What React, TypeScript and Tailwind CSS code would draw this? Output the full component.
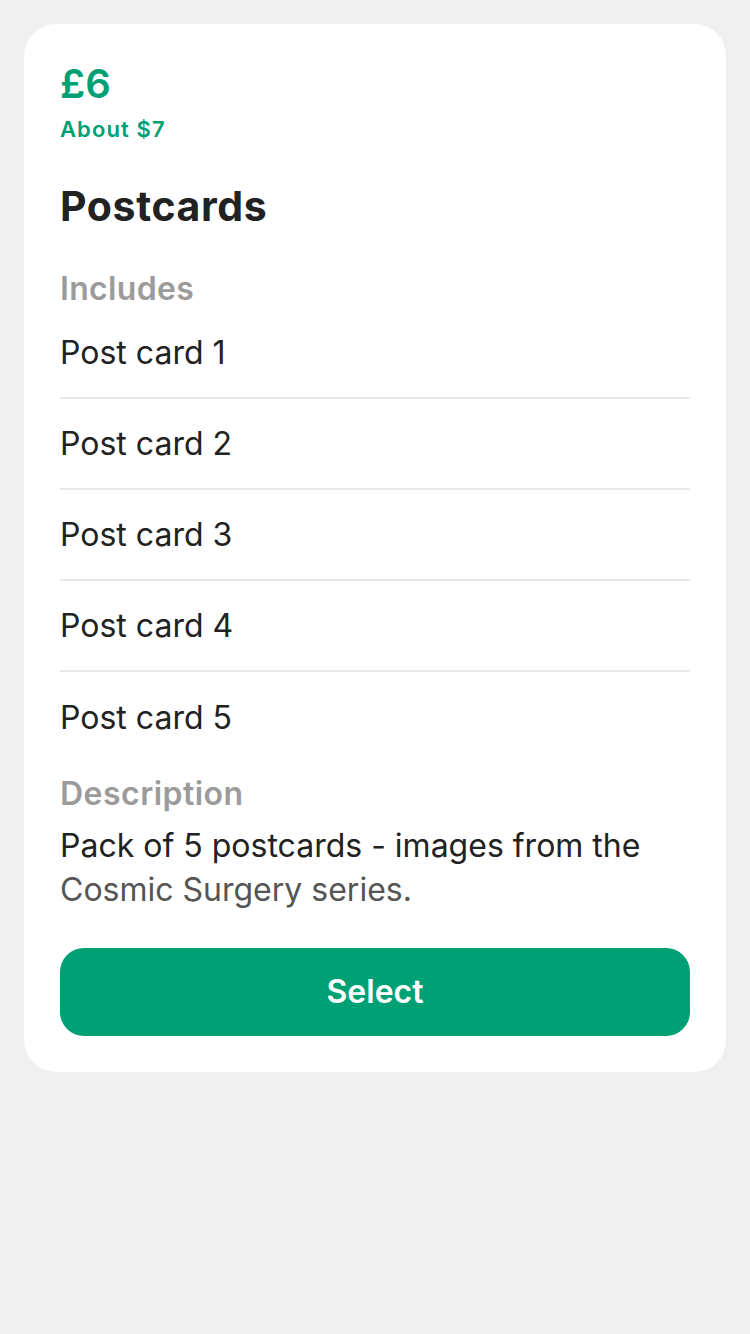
import React from 'react';

const items = ['Post card 1', 'Post card 2', 'Post card 3', 'Post card 4', 'Post card 5'];

const App: React.FC = () => {
  return (
    <div
      className="min-h-[1334px] w-full bg-[#efefef] pt-6"
      style={{ fontFamily: 'Inter, "Noto Sans", sans-serif' }}
    >
      <div className="mx-6 rounded-[32px] bg-white px-9 py-9">
        {/* Price */}
        <div className="text-[40px] font-semibold leading-[48px] text-[#00a074]">£6</div>
        <div className="mt-2 text-[22px] font-semibold leading-[26px] tracking-[0.05em] text-[#00a074]">About $7</div>

        <h1 className="mt-10 text-[41px] font-bold leading-[48px] tracking-[0.015em] text-[#222222]">Postcards</h1>

        {/* Includes */}
        <div className="mt-10 text-[32px] font-semibold leading-[38px] tracking-[0.01em] text-[#9b9b9b]">Includes</div>
        <div className="flex flex-col">
          {items.map((item, i) => (
            <div
              key={item}
              className={`flex h-[91px] items-center text-[32px] text-[#222222] ${
                i < items.length - 1 ? 'border-b-2 border-[#e8e8e8]' : ''
              }`}
            >
              {item}
            </div>
          ))}
        </div>

        {/* Description */}
        <div className="mt-3 text-[32px] font-semibold leading-[38px] tracking-[0.015em] text-[#9b9b9b]">Description</div>
        <p className="mt-[11px] text-[32px] leading-[44px] text-[#222222]">
          Pack of 5 postcards - images from the{' '}
          <span className="text-[#555555]">Cosmic Surgery series.</span>
        </p>

        <button className="mt-9 flex h-[88px] w-full items-center justify-center rounded-[24px] bg-[#00a075] text-[32px] font-semibold text-white">
          Select
        </button>
      </div>
    </div>
  );
};

export default App;
